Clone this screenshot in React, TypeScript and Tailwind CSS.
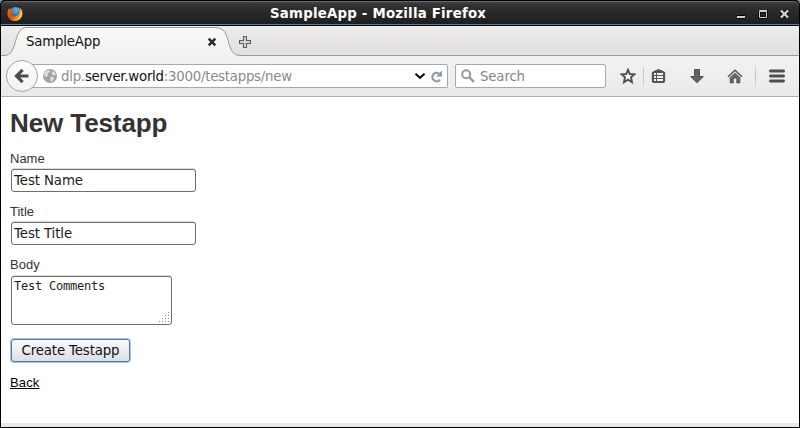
import React from "react";

const ui = "font-['DejaVu_Sans',sans-serif]";

function FirefoxLogo() {
  return (
    <svg className="ml-[6px] mt-[5px] shrink-0" width="16" height="16" viewBox="0 0 16 16">
      <defs>
        <radialGradient id="globe" cx="0.55" cy="0.2" r="0.8">
          <stop offset="0" stopColor="#4fc0e8" />
          <stop offset="1" stopColor="#11408c" />
        </radialGradient>
        <linearGradient id="fox" x1="0" y1="0" x2="1" y2="0.6">
          <stop offset="0" stopColor="#e8731c" />
          <stop offset="0.5" stopColor="#dc4a14" />
          <stop offset="1" stopColor="#ffc53a" />
        </linearGradient>
      </defs>
      <circle cx="8.4" cy="7.4" r="6.5" fill="url(#globe)" />
      <path
        d="M1.8 2.2 L3.6 3.6 L6 3.6 L5.4 5.4 L7.4 6.4 L5.6 7.6 C5.2 9.6 7 10.8 9.4 10 C11.8 9.2 12.6 7 12 4 L13 2 C15.6 4.4 16 8 14.4 11 C12.6 14.8 8.4 15.9 5 14.6 C1 13 -0.2 8.6 0.8 5 Z"
        fill="url(#fox)"
      />
      <path d="M13.2 2.2 C15.8 5 15.8 9 14 11.6 C13 13 11.6 14 10 14.4 C13.4 12 14.4 7 13.2 2.2Z" fill="#ffd34a" />
    </svg>
  );
}

function TitleBar() {
  return (
    <header className="flex h-[26px] shrink-0 rounded-t-[5px] border-t border-b border-black bg-linear-to-b from-[#414141] from-5% via-[#303030] via-20% to-[#1d1d1d] shadow-[inset_0_1px_0_#686868,inset_0_-1px_0_#557ba9]">
      <FirefoxLogo />
      <h1 className={`${ui} flex-1 text-center text-[13.33px] leading-[25px] font-bold tracking-[0.22px] text-white`}>
        <span className="mr-[3px] inline-block w-[216px] text-left whitespace-nowrap">SampleApp - Mozilla Firefox</span>
      </h1>
      <svg className="mt-[7px] mr-[9px] shrink-0" width="54" height="12" viewBox="0 0 54 12">
        <path d="M1 9h8" stroke="#000" strokeWidth="4" />
        <path d="M1 9h8" stroke="#d0d0d0" strokeWidth="2" />
        <path d="M23.5 3.5h7v6h-7z" fill="none" stroke="#0c0c0c" strokeWidth="3" />
        <path d="M23.5 3.5h7v6h-7zM23 2.5h8" fill="none" stroke="#d0d0d0" />
        <path d="M45.5 3l6 6M51.5 3l-6 6" stroke="#0c0c0c" strokeWidth="4.5" />
        <path d="M45 2.5l7 7M52 2.5l-7 7" stroke="#d0d0d0" strokeWidth="2.4" />
      </svg>
    </header>
  );
}

function TabStrip() {
  return (
    <div className="relative flex h-[30px] shrink-0 border-b border-[#9b9b99] bg-linear-to-b from-[#ececea] to-[#e1e0de]">
      <svg className="absolute top-0 left-0" width="245" height="30" viewBox="0 0 245 30">
        <defs>
          <linearGradient id="tab" x1="0" y1="0" x2="0" y2="1">
            <stop offset="0" stopColor="#f9f9f9" />
            <stop offset="1" stopColor="#f2f1f0" />
          </linearGradient>
        </defs>
        <path
          d="M0 29.5 H3 C18 29.5 11 1.5 26 1.5 H214 C233 1.5 222 29.5 240 29.5 V30 H0Z"
          fill="url(#tab)"
        />
        <path
          d="M0 29.5 H3 C18 29.5 11 1.5 26 1.5 H214 C233 1.5 222 29.5 240 29.5"
          fill="none"
          stroke="#989896"
        />
      </svg>
      <div className="relative flex w-[236px] items-center pt-[2px] pl-[25px]">
        <span className={`${ui} w-[181px] text-[13.33px] leading-[28px] tracking-[-0.2px] text-[#111]`}>SampleApp</span>
        <svg width="10" height="10" viewBox="0 0 10 10">
          <path d="M1.7 1.7l6.6 6.6M8.3 1.7l-6.6 6.6" stroke="#2b2b2b" strokeWidth="2.5" />
        </svg>
      </div>
      <svg className="relative mt-[9px] ml-px" width="14" height="14" viewBox="0 0 14 14">
        <path
          d="M5.5 1.5h3v4h4v3h-4v4h-3v-4h-4v-3h4z"
          fill="#d6d6d5"
          stroke="#5e5e5e"
          strokeWidth="1.1"
        />
      </svg>
    </div>
  );
}

function AddressBar() {
  return (
    <div className="-ml-[7px] flex h-6 w-[418px] items-center rounded-[2px] border border-[#a9a8a6] bg-white pl-[12px]">
      <svg width="14" height="14" viewBox="0 0 14 14">
        <circle cx="7" cy="7" r="7" fill="#a2a2a2" />
        <path
          d="M1 5 L2.6 2.6 L5 1.2 L7.4 1.2 L6.2 3.4 L4.2 4.6 L5.4 6.4 L3.6 7.8 L1.6 7Z M8.8 2.6 L11 2.4 L12.8 5 L12.2 6.8 L10 6.2 L8.8 4.6Z M7.4 8 L9.8 7.6 L11.2 9 L10 11.6 L8 12.8 L7.2 10.4Z"
          fill="#e0e0e0"
        />
      </svg>
      <span className={`${ui} ml-[4px] flex-1 pt-px text-[13.33px] leading-[23px] tracking-[-0.25px] whitespace-nowrap text-[#8a8a8a]`}>
        dlp.<span className="text-[#111]">server.world</span>:3000/testapps/new
      </span>
      <svg className="mr-[4px]" width="12" height="12" viewBox="0 0 12 12">
        <path d="M1.5 3.8L6 7.9L10.5 3.8" fill="none" stroke="#111" strokeWidth="2.1" />
      </svg>
      <svg className="mr-[4px]" width="13" height="13" viewBox="0 0 13 13">
        <path d="M10 9.8A4.3 4.3 0 1 1 9 3.4" fill="none" stroke="#8b9bab" strokeWidth="2.2" />
        <path d="M12 0.6V6.6H6Z" fill="#8b9bab" />
      </svg>
    </div>
  );
}

function ToolbarIcons() {
  return (
    <>
      <svg className="ml-[14px] shrink-0" width="16" height="16" viewBox="0 0 16 16">
        <path
          d="M8 1.8L9.8 6L14.4 6.3L11 9.4L12 14.2L8 11.7L4 14.2L5 9.4L1.6 6.3L6.2 6Z"
          fill="#f7f7f7"
          stroke="#505050"
          strokeWidth="1.9"
        />
      </svg>
      <i className="mx-[7px] h-[18px] w-px bg-[#c3cbd3]" />
      <svg className="shrink-0" width="15" height="16" viewBox="0 0 15 16">
        <path d="M4 3V2H6L7.5 0.5L9 2H11V3H12.5L14.2 4.5V13.4L13 15H2L0.8 13.4V4.5L2.5 3Z" fill="#555" />
        <path d="M3 5h2v2H3zM6 5h6v2H6zM3 8h2v2H3zM6 8h6v2H6zM3 11h2v2H3zM6 11h6v2H6z" fill="#f0f0f0" />
      </svg>
      <svg className="ml-[24px] shrink-0" width="14" height="16" viewBox="0 0 14 16">
        <path d="M4.5 1.5h5v7h3.8L7 14.8L0.7 8.5h3.8z" fill="#646464" stroke="#505050" />
      </svg>
      <svg className="ml-[23px] shrink-0" width="16" height="16" viewBox="0 0 16 16">
        <path d="M1 8.7L8 2.2L15 8.7" fill="none" stroke="#555" strokeWidth="1.5" />
        <path d="M8 4.9L13 9.5v5.5H9.6v-4.8H6.5V15H3V9.5z" fill="#666" stroke="#555" strokeWidth="0.6" />
      </svg>
      <i className="ml-[12px] h-[32px] w-px bg-linear-to-b from-transparent via-[#b7c0c9] to-transparent" />
      <svg className="ml-[13px] shrink-0" width="16" height="14" viewBox="0 0 16 14">
        <path d="M1.4 2h13.2M1.4 7h13.2M1.4 12h13.2" stroke="#4e4e4e" strokeWidth="2.8" strokeLinecap="round" />
      </svg>
    </>
  );
}

function NavBar() {
  return (
    <nav className="flex h-[41px] shrink-0 items-center border-b border-[#b0afad] bg-linear-to-b from-[#f3f2f1] to-[#ebeae8] pl-[5px]">
      <div className="z-10 flex size-8 shrink-0 items-center justify-center rounded-full border border-[#9aa8b8] bg-linear-to-b from-[#fdfdfd] to-[#f2f2f2]">
        <svg width="16" height="16" viewBox="0 0 16 16">
          <path d="M8.6 1.8L2.5 8L8.6 14.2M3.5 8H14.5" fill="none" stroke="#4d4d4d" strokeWidth="3.2" />
        </svg>
      </div>
      <div className="-ml-px flex flex-1 items-center">
        <AddressBar />
        <div className="ml-[7px] flex h-6 w-[151px] items-center rounded-[2px] border border-[#a9a8a6] bg-white pl-[5px]">
          <svg width="14" height="14" viewBox="0 0 14 14">
            <circle cx="5.2" cy="5.2" r="4" fill="none" stroke="#999" strokeWidth="2" />
            <path d="M8.2 8.2L13 13" stroke="#999" strokeWidth="2.4" />
          </svg>
          <span className={`${ui} ml-[5px] pt-px text-[13.33px] leading-[23px] tracking-[-0.15px] text-[#858585]`}>Search</span>
        </div>
        <ToolbarIcons />
      </div>
    </nav>
  );
}

function Field({ label, value }: { label: string; value: string }) {
  return (
    <div className="mb-[11px]">
      <label className="block h-[19px] leading-[18px]">{label}</label>
      <input
        type="text"
        defaultValue={value}
        className={`${ui} ml-px block h-[23px] w-[185px] rounded-[3px] border border-[#6f6e6b] bg-white px-[2px] pb-[1px] text-[13.33px] tracking-[-0.1px] text-[#1c1c1c] shadow-[0_-1px_0_#dcdbd8]`}
      />
    </div>
  );
}

function Page() {
  return (
    <main className="flex-1 bg-white pl-[9px] font-['Liberation_Sans',Arial,sans-serif] text-[13px] text-[#333]">
      <h2 className="mb-[12px] pt-[12px] text-[26px] leading-[29px] font-bold tracking-[-0.1px]">New Testapp</h2>
      <Field label="Name" value="Test Name" />
      <Field label="Title" value="Test Title" />
      <label className="block h-[20px] leading-[18px]">Body</label>
      <div className="relative ml-px w-[161px]">
        <textarea
          defaultValue="Test Comments"
          className="block h-[49px] w-[161px] resize-none rounded-[3px] border border-[#6f6e6b] bg-white px-[2px] py-[2px] font-['DejaVu_Sans_Mono',monospace] text-[12px] leading-[14px] tracking-[-0.22px] text-[#1c1c1c] shadow-[0_-1px_0_#dcdbd8]"
        />
        <svg className="absolute right-[2px] bottom-[2px]" width="11" height="11" viewBox="0 0 11 11">
          <path
            d="M9 0h1v1h-1zM6 3h1v1h-1zM9 3h1v1h-1zM3 6h1v1h-1zM6 6h1v1h-1zM9 6h1v1h-1zM0 9h1v1h-1zM3 9h1v1h-1zM6 9h1v1h-1zM9 9h1v1h-1z"
            fill="#8c8c8c"
          />
        </svg>
      </div>
      <button
        className={`${ui} mt-[14px] ml-px block h-[23px] w-[119px] rounded-[3px] border border-[#54779f] bg-linear-to-b from-[#fafafb] to-[#dcdfe6] text-[13.33px] leading-[21px] tracking-[-0.15px] whitespace-nowrap text-[#111] shadow-[0_0_0_1px_#a9c3e3]`}
      >
        Create Testapp
      </button>
      <a className="mt-[12px] inline-block leading-[18px] tracking-[0.15px] text-black underline">Back</a>
    </main>
  );
}

export default function App() {
  return (
    <div className="h-[428px] w-[800px] overflow-hidden bg-[#7d93b8]">
      <div className="flex h-full flex-col rounded-t-[5px] border-x border-b border-black bg-black">
        <TitleBar />
        <TabStrip />
        <NavBar />
        <Page />
        <footer className="h-[4px] shrink-0 bg-[#e9e8e6]" />
      </div>
    </div>
  );
}
